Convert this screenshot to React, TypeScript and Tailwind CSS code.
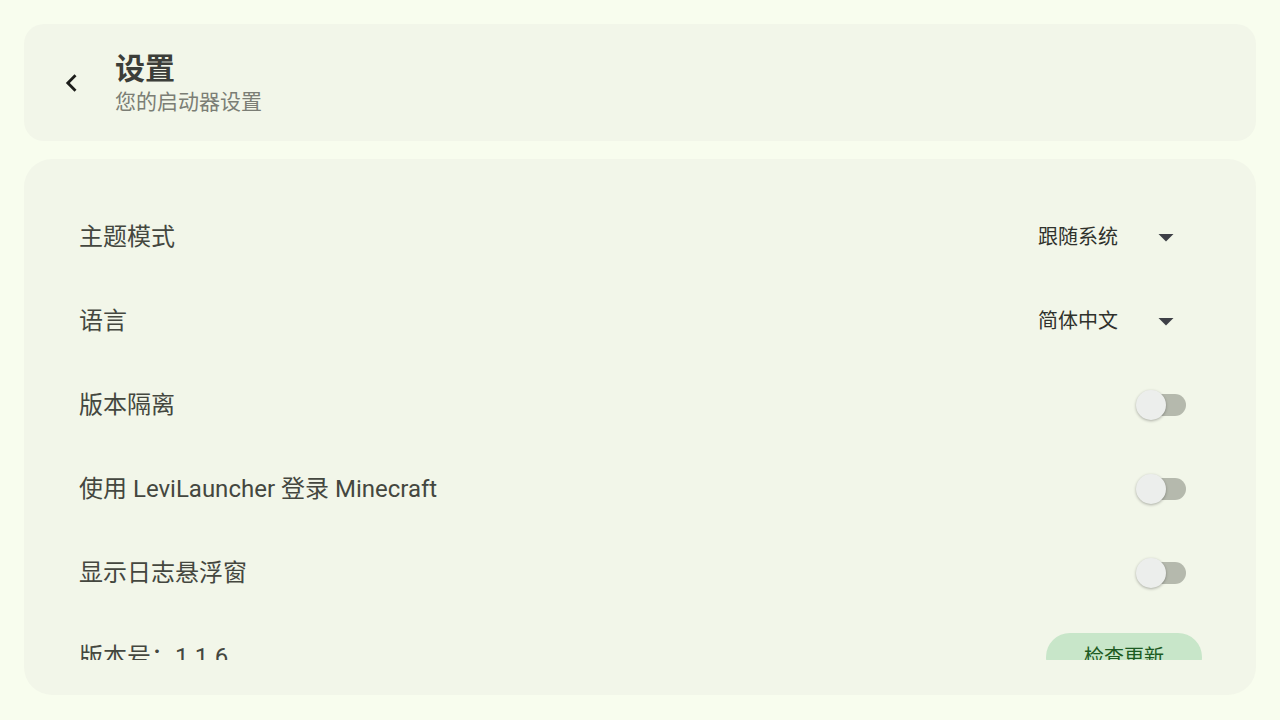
import React from 'react';

type Row =
  | { kind: 'select'; label: string; value: string }
  | { kind: 'switch'; label: string; on: boolean }
  | { kind: 'action'; label: string; action: string };

const rows: Row[] = [
  { kind: 'select', label: '主题模式', value: '跟随系统' },
  { kind: 'select', label: '语言', value: '简体中文' },
  { kind: 'switch', label: '版本隔离', on: false },
  { kind: 'switch', label: '使用 LeviLauncher 登录 Minecraft', on: false },
  { kind: 'switch', label: '显示日志悬浮窗', on: false },
  { kind: 'action', label: '版本号：1.1.6', action: '检查更新' },
];

const font = { fontFamily: "Roboto, 'Noto Sans CJK SC', sans-serif" };

// Material-style switch, off state
const Switch: React.FC<{ on: boolean }> = ({ on }) => (
  <div className="relative w-[50px] h-[32px] mr-[16px]">
    <div
      className={`absolute right-0 top-[5px] w-[46px] h-[22px] rounded-full ${
        on ? 'bg-[#9ccc65]' : 'bg-[#b5b9ad]'
      }`}
    />
    <div className="absolute left-0 top-[1px] w-[30px] h-[30px] rounded-full bg-[#eceeec] shadow-[0_1px_3px_rgba(0,0,0,0.3)]" />
  </div>
);

const Select: React.FC<{ value: string }> = ({ value }) => (
  <div className="flex items-center gap-[30px] mr-[18px]">
    <span className="text-[20px] text-[#2f312c]">{value}</span>
    <svg className="w-[36px] h-[36px] text-[#3e4047]" viewBox="0 0 24 24" fill="currentColor">
      <path d="M7 10l5 5 5-5z" />
    </svg>
  </div>
);

export default function App() {
  return (
    <div className="w-full h-[720px] bg-[#f8fdee] p-6 flex flex-col gap-[18px]" style={font}>
      {/* Header */}
      <div className="h-[117px] shrink-0 rounded-[20px] bg-[#f2f6e9] flex items-center pl-[28px]">
        <button className="w-[40px] h-[40px] flex items-center justify-center text-[#1c1d1a]" aria-label="返回">
          <svg className="w-[20px] h-[20px]" viewBox="0 0 24 24" fill="none" stroke="currentColor" strokeWidth={3.4} strokeLinecap="square">
            <path d="M15 4l-8 8 8 8" />
          </svg>
        </button>
        <div className="ml-[23px] flex flex-col">
          <h1 className="text-[30px] leading-[38px] font-bold text-[#3c3e39]">设置</h1>
          <p className="text-[21px] leading-[28px] text-[#7b7e75]">您的启动器设置</p>
        </div>
      </div>

      {/* Settings list */}
      <div className="h-[536px] shrink-0 rounded-[28px] bg-[#f2f6e9] pt-[36px] pb-[35px] pl-[55px] pr-[54px]">
        <div className="h-full overflow-hidden">
          {rows.map((row) => (
            <div key={row.label} className="h-[84px] flex items-center justify-between">
              <span className="text-[24px] text-[#44473f]">{row.label}</span>
              {row.kind === 'select' && <Select value={row.value} />}
              {row.kind === 'switch' && <Switch on={row.on} />}
              {row.kind === 'action' && (
                <button className="h-[48px] w-[156px] rounded-full bg-[#c8e6c9] text-[20px] text-[#1d5b22]">
                  {row.action}
                </button>
              )}
            </div>
          ))}
        </div>
      </div>
    </div>
  );
}
